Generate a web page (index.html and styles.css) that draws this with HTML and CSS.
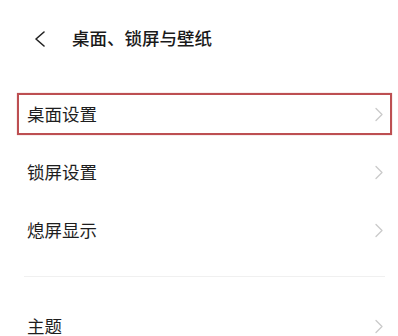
FILE: index.html
```html
<!DOCTYPE html>
<html lang="zh-CN">
<head>
<meta charset="utf-8">
<link rel="stylesheet" href="styles.css">
</head>
<body>
<div class="page">
  <header class="header">
    <svg class="back" width="12" height="16" viewBox="0 0 12 16"><path d="M10 1 L2 8 L10 15" fill="none" stroke="#222" stroke-width="1.6" stroke-linecap="round" stroke-linejoin="round"/></svg>
    <h1 class="title">桌面、锁屏与壁纸</h1>
  </header>
  <ul class="list">
    <li class="row row-marked"><span class="label">桌面设置</span><span class="mark"></span><svg class="chev" width="10" height="15" viewBox="0 0 10 15"><path d="M2 1.5 L8 7.5 L2 13.5" fill="none" stroke="#cacaca" stroke-width="1.3" stroke-linecap="round" stroke-linejoin="round"/></svg></li>
    <li class="row"><span class="label">锁屏设置</span><svg class="chev" width="10" height="15" viewBox="0 0 10 15"><path d="M2 1.5 L8 7.5 L2 13.5" fill="none" stroke="#cacaca" stroke-width="1.3" stroke-linecap="round" stroke-linejoin="round"/></svg></li>
    <li class="row"><span class="label">熄屏显示</span><svg class="chev" width="10" height="15" viewBox="0 0 10 15"><path d="M2 1.5 L8 7.5 L2 13.5" fill="none" stroke="#cacaca" stroke-width="1.3" stroke-linecap="round" stroke-linejoin="round"/></svg></li>
  </ul>
  <div class="divider"></div>
  <ul class="list list-second">
    <li class="row"><span class="label">主题</span><svg class="chev" width="10" height="15" viewBox="0 0 10 15"><path d="M2 1.5 L8 7.5 L2 13.5" fill="none" stroke="#cacaca" stroke-width="1.3" stroke-linecap="round" stroke-linejoin="round"/></svg></li>
  </ul>
</div>
</body>
</html>
```
FILE: styles.css
```css
html, body {
  margin: 0;
  padding: 0;
  background: #ffffff;
}
body {
  font-family: "Noto Sans CJK SC", "Noto Sans", sans-serif;
  color: #1e1e1e;
  overflow: hidden;
}
.page {
  width: 398px;
}
.header {
  height: 76px;
  display: flex;
  align-items: center;
  padding-left: 34px;
  gap: 26px;
}
.back {
  display: block;
  margin-top: 2px;
}
.title {
  margin: 0;
  font-size: 17.5px;
  font-weight: 500;
  line-height: 1;
  color: #1a1a1a;
}
.list {
  list-style: none;
  margin: 0;
  padding: 9px 0 0;
}
.list-second {
  padding-top: 20px;
}
.row {
  position: relative;
  height: 58px;
  display: flex;
  align-items: center;
  justify-content: space-between;
  padding: 0 14px 0 27px;
}
.label {
  font-size: 17.5px;
  line-height: 1;
  color: #1e1e1e;
}
.chev {
  display: block;
}
.mark {
  position: absolute;
  top: 8px;
  bottom: 8px;
  left: 17px;
  right: 6px;
  border: 2px solid #bd4f52;
  box-shadow: 0 0 1px rgba(189, 79, 82, 0.6);
  pointer-events: none;
}
.divider {
  height: 1px;
  margin: 17px 13px 0 24px;
  background: #f0f0f0;
}
```
